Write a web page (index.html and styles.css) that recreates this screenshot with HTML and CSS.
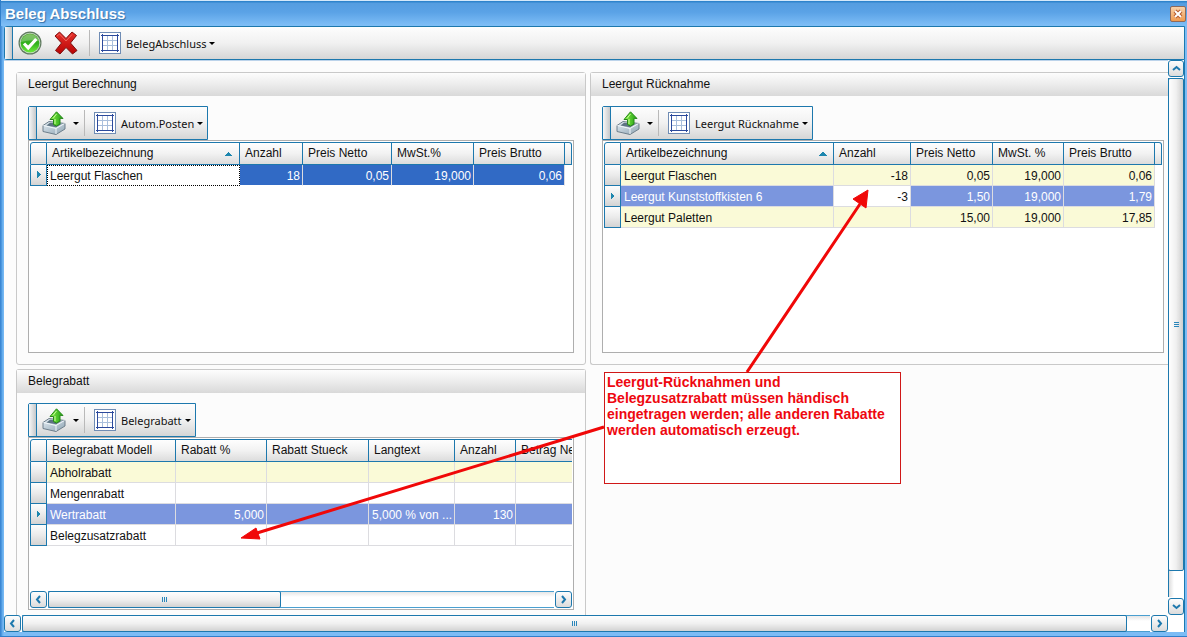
FILE: index.html
```html
<!DOCTYPE html>
<html lang="de">
<head>
<meta charset="utf-8">
<title>Beleg Abschluss</title>
<link rel="stylesheet" href="styles.css">
</head>
<body>
<svg class="defs" aria-hidden="true">
  <defs>
    <linearGradient id="green" x1="0" y1="0" x2="0" y2="1"><stop offset="0" stop-color="#5fae3a"/><stop offset=".5" stop-color="#2fae1c"/><stop offset="1" stop-color="#6dea3c"/></linearGradient>
    <linearGradient id="red" x1="0" y1="0" x2="0" y2="1"><stop offset="0" stop-color="#e8322c"/><stop offset="1" stop-color="#b80404"/></linearGradient>
    <linearGradient id="arrow" x1="0" y1="0" x2="1" y2="0"><stop offset="0" stop-color="#8cf04a"/><stop offset="1" stop-color="#1fa012"/></linearGradient>
    <linearGradient id="tray" x1="0" y1="0" x2="1" y2="1"><stop offset="0" stop-color="#e4edf3"/><stop offset="1" stop-color="#8ea4b3"/></linearGradient>
    <symbol id="i-grid" viewBox="0 0 22 22">
      <rect x=".5" y=".5" width="21" height="21" fill="#fff" stroke="#6f8cb4"/>
      <path d="M8.500 4v14M13.500 4v14M4 8.500h14M4 13.500h14" stroke="#a9bfdc" fill="none"/>
      <path d="M3.500 2v18M18.500 2v18M2 3.500h18M2 18.500h18" stroke="#2c4a9c" fill="none"/>
    </symbol>
    <symbol id="i-export" viewBox="0 0 24 24">
      <path d="M1 14.500 7 10.500 23 12.500V18L14 23.500 1 20.500z" fill="url(#tray)" stroke="#6e7f8b"/>
      <path d="M1.500 14.500 14 17.500 22.500 12.500M14 17.500v5.500" fill="none" stroke="#f3f8fb"/>
      <path d="M4.500 14.500 8 11.800 19.500 13 14 16.300z" fill="#5d7382"/>
      <path d="M11.500 13.500V8.500H8L14.500.800 21 7.500l-3-.2V13l-3.500 2z" fill="url(#arrow)" stroke="#27881a"/>
      <path d="M11 7.500 14.500 3M13 8v5" stroke="#c8ff98" fill="none"/>
    </symbol>
  </defs>
</svg>

<main class="window">
  <header class="titlebar">
    <h1 class="window-title">Beleg Abschluss</h1>
    <button class="close" type="button" aria-label="Schließen">
      <svg width="10" height="10" viewBox="0 0 10 10"><path d="M2 2l6 6M8 2 2 8" stroke="#b4582c" stroke-width="4"/><path d="M2 2l6 6M8 2 2 8" stroke="#fff" stroke-width="2"/></svg>
    </button>
  </header>

  <div class="toolbar toolbar-main">
    <span class="grip"></span>
    <button class="tool" type="button" aria-label="Übernehmen">
      <svg width="24" height="24" viewBox="0 0 24 24"><circle cx="12" cy="12" r="11.500" fill="#5f7a5f"/><circle cx="12" cy="12" r="10.300" fill="#c9dcc6"/><circle cx="12" cy="12" r="9.400" fill="url(#green)"/><path d="M3 11a9.200 9 0 0 1 18-1Q13 8 3 11z" fill="#fff" opacity=".25"/><path d="M6 12.500l4.200 4.300L18.300 8" fill="none" stroke="#fff" stroke-width="3.200"/></svg>
    </button>
    <button class="tool tool-cancel" type="button" aria-label="Abbrechen">
      <svg width="24" height="24" viewBox="0 0 24 24"><path d="M5.500 1 12 7.500 18 1l4.500 3.500-6 7.500 6.500 7.500-4.500 3.500L12 16.500 6 23l-4.500-3.500L7.500 12 1 5z" fill="url(#red)" stroke="#7c1010" stroke-linejoin="round"/><path d="M3 5l2.500-2L12 10l6-6.500" fill="none" stroke="#ff8b80" opacity=".6"/></svg>
    </button>
    <span class="separator"></span>
    <button class="tool tool-menu" type="button"><svg width="22" height="22"><use href="#i-grid"/></svg><span>BelegAbschluss</span><i class="caret"></i></button>
  </div>

  <div class="viewport">
    <div class="content">
      <section class="panel">
        <h2 class="panel-title">Leergut Berechnung</h2>
        <div class="panel-body">
          <div class="toolbar toolbar-small">
            <span class="grip"></span>
            <button class="tool tool-export" type="button" aria-label="Exportieren"><svg width="24" height="24"><use href="#i-export"/></svg><i class="caret"></i></button>
            <span class="separator"></span>
            <button class="tool tool-menu" type="button"><svg width="22" height="22"><use href="#i-grid"/></svg><span>Autom.Posten</span><i class="caret"></i></button>
          </div>
          <div class="grid">
            <div class="grid-view">
              <table>
                <colgroup><col class="w17"><col><col class="w63"><col class="w89"><col class="w82"><col class="w91"><col class="w7"></colgroup>
                <thead><tr><th></th><th class="sorted">Artikelbezeichnung</th><th>Anzahl</th><th>Preis Netto</th><th>MwSt.%</th><th>Preis Brutto</th><th class="end"></th></tr></thead>
                <tbody>
                  <tr class="active"><th class="current"></th><td class="focus">Leergut Flaschen</td><td class="num">18</td><td class="num">0,05</td><td class="num">19,000</td><td class="num">0,06</td><td class="rest"></td></tr>
                </tbody>
              </table>
            </div>
          </div>
        </div>
      </section>

      <section class="panel panel-right">
        <h2 class="panel-title">Leergut Rücknahme</h2>
        <div class="panel-body">
          <div class="toolbar toolbar-small">
            <span class="grip"></span>
            <button class="tool tool-export" type="button" aria-label="Exportieren"><svg width="24" height="24"><use href="#i-export"/></svg><i class="caret"></i></button>
            <span class="separator"></span>
            <button class="tool tool-menu" type="button"><svg width="22" height="22"><use href="#i-grid"/></svg><span>Leergut Rücknahme</span><i class="caret"></i></button>
          </div>
          <div class="grid">
            <div class="grid-view">
              <table>
                <colgroup><col class="w17"><col><col class="w77"><col class="w82"><col class="w71"><col class="w91"><col class="w7"></colgroup>
                <thead><tr><th></th><th class="sorted">Artikelbezeichnung</th><th>Anzahl</th><th>Preis Netto</th><th>MwSt. %</th><th>Preis Brutto</th><th class="end"></th></tr></thead>
                <tbody>
                  <tr class="odd"><th></th><td>Leergut Flaschen</td><td class="num">-18</td><td class="num">0,05</td><td class="num">19,000</td><td class="num">0,06</td><td class="rest"></td></tr>
                  <tr class="selected"><th class="current"></th><td>Leergut Kunststoffkisten 6</td><td class="num edit">-3</td><td class="num">1,50</td><td class="num">19,000</td><td class="num">1,79</td><td class="rest"></td></tr>
                  <tr class="odd"><th></th><td>Leergut Paletten</td><td></td><td class="num">15,00</td><td class="num">19,000</td><td class="num">17,85</td><td class="rest"></td></tr>
                </tbody>
              </table>
            </div>
          </div>
        </div>
      </section>

      <section class="panel panel-bottom">
        <h2 class="panel-title">Belegrabatt</h2>
        <div class="panel-body">
          <div class="toolbar toolbar-small">
            <span class="grip"></span>
            <button class="tool tool-export" type="button" aria-label="Exportieren"><svg width="24" height="24"><use href="#i-export"/></svg><i class="caret"></i></button>
            <span class="separator"></span>
            <button class="tool tool-menu" type="button"><svg width="22" height="22"><use href="#i-grid"/></svg><span>Belegrabatt</span><i class="caret"></i></button>
          </div>
          <div class="grid">
            <div class="grid-view">
              <table class="wide">
                <colgroup><col class="w17"><col class="w129"><col class="w91"><col class="w102"><col class="w86"><col class="w61"><col></colgroup>
                <thead><tr><th></th><th>Belegrabatt Modell</th><th>Rabatt %</th><th>Rabatt Stueck</th><th>Langtext</th><th>Anzahl</th><th>Betrag Netto</th></tr></thead>
                <tbody>
                  <tr class="odd"><th></th><td>Abholrabatt</td><td></td><td></td><td></td><td></td><td></td></tr>
                  <tr><th></th><td>Mengenrabatt</td><td></td><td></td><td></td><td></td><td></td></tr>
                  <tr class="selected"><th class="current"></th><td>Wertrabatt</td><td class="num">5,000</td><td></td><td>5,000 % von ...</td><td class="num">130</td><td></td></tr>
                  <tr><th></th><td>Belegzusatzrabatt</td><td></td><td></td><td></td><td></td><td></td></tr>
                </tbody>
              </table>
            </div>
            <div class="scroll scroll-h">
              <button class="scroll-btn" type="button" aria-label="Nach links"><svg width="7" height="9" viewBox="0 0 7 9"><path d="M5 1 2 4.500 5 8"/></svg></button>
              <div class="track"><span class="thumb thumb-inner"><i></i></span></div>
              <button class="scroll-btn" type="button" aria-label="Nach rechts"><svg width="7" height="9" viewBox="0 0 7 9"><path d="M2 1l3 3.500L2 8"/></svg></button>
            </div>
          </div>
        </div>
      </section>
    </div>

    <div class="scroll scroll-v">
      <button class="scroll-btn" type="button" aria-label="Nach oben"><svg width="9" height="7" viewBox="0 0 9 7"><path d="M1 5 4.500 2 8 5"/></svg></button>
      <div class="track"><span class="thumb thumb-y"><i></i></span></div>
      <button class="scroll-btn" type="button" aria-label="Nach unten"><svg width="9" height="7" viewBox="0 0 9 7"><path d="M1 2l3.500 3L8 2"/></svg></button>
    </div>
    <div class="scroll scroll-h">
      <button class="scroll-btn" type="button" aria-label="Nach links"><svg width="7" height="9" viewBox="0 0 7 9"><path d="M5 1 2 4.500 5 8"/></svg></button>
      <div class="track"><span class="thumb thumb-x"><i></i></span></div>
      <button class="scroll-btn" type="button" aria-label="Nach rechts"><svg width="7" height="9" viewBox="0 0 7 9"><path d="M2 1l3 3.500L2 8"/></svg></button>
    </div>
    <div class="corner"></div>
  </div>

  <svg class="arrows" width="920" height="560" viewBox="0 0 920 560" aria-hidden="true">
    <path d="M747 372 860 204M604 427 257 533" stroke="#f00808" stroke-width="3" fill="none"/>
    <path d="M868 190 866 208 853 199zM241 538 256 528 260 539z" fill="#f00808" stroke="#f00808"/>
  </svg>
  <p class="note">Leergut-Rücknahmen und Belegzusatzrabatt müssen händisch eingetragen werden; alle anderen Rabatte werden automatisch erzeugt.</p>
</main>
</body>
</html>
```
FILE: styles.css
```css
* { box-sizing: border-box; }

body {
  margin: 0;
  font-family: "Liberation Sans", Arial, sans-serif;
  font-size: 12px;
  color: #111;
  overflow: hidden;
}

button { font: inherit; color: inherit; padding: 0; border: 0; background: none; }
svg { display: block; flex: none; }
.defs { position: absolute; width: 0; height: 0; }

.window {
  position: relative;
  display: flex;
  flex-direction: column;
  height: 100vh;
  padding: 0 2px 4px 4px;
  background: linear-gradient(90deg, #3b87d3 0, #3b87d3 1px, #5fa8ea 2px, #7cbcf5 4px, #7cbcf5);
  border-bottom: 1px solid #2f7fcb;
}

/* title bar */
.titlebar {
  display: flex;
  align-items: center;
  justify-content: space-between;
  height: 26px;
  margin: 0 -2px 0 -4px;
  padding: 2px 0 0 4px;
  border-left: 1px solid #2f7fcb;
  background: linear-gradient(#d6e9fa 0, #d6e9fa 1px, #2f84cc 1px, #2f84cc 2px, #559de0 3px, #5aa2e6 12px, #7dbdf6 25px);
}
.window-title {
  margin: 0;
  font-size: 15px;
  line-height: 22px;
  color: #fff;
  text-shadow: 1px 1px 1px #356fa8;
}
.close {
  display: grid;
  place-items: center;
  width: 16px;
  height: 16px;
  margin-right: 1px;
  border: 1px solid #8f6a5a;
  border-radius: 2px;
  background: linear-gradient(#f9d2a9, #f09a4e);
}

/* toolbars */
.toolbar {
  display: flex;
  align-items: center;
  flex: none;
  height: 34px;
  border: 1px solid #1d78ad;
  background: linear-gradient(#fdfdfd, #f1f1f1 50%, #d5d6d6);
  font-family: "Noto Sans", "Open Sans", sans-serif;
  font-size: 11px;
}
.toolbar-main { border-radius: 3px 0 0 3px; }
.toolbar-small { align-self: flex-start; border-radius: 2px 0 0 0; }
.grip {
  align-self: stretch;
  width: 8px;
  border-right: 1px solid #1d78ad;
  background: linear-gradient(90deg, #f7f7f7, #c6c8ca);
}
.tool { display: flex; align-items: center; margin-left: 5px; }
.tool-cancel { margin-left: 12px; }
.separator { width: 1px; height: 26px; background: #b9b9b9; }
.tool-cancel + .separator { margin-left: 11px; }
.tool-export { gap: 7px; margin-right: 5px; }
.tool-menu { gap: 5px; margin-left: 9px; padding-right: 4px; }
.caret { border: 3px solid transparent; border-top-color: #000; border-bottom: 0; }
.tool-menu .caret { margin-left: -2px; }

/* scrolled area */
.viewport {
  display: grid;
  grid-template: minmax(0, 1fr) 17px / minmax(0, 1fr) 17px;
  flex: 1;
  min-height: 0;
  background: #fff;
}
.content {
  display: grid;
  grid-template: minmax(0, 293fr) minmax(0, 246fr) / minmax(0, 570fr) minmax(0, 578fr);
  gap: 4px;
  padding: 11px 0 0 12px;
  border-top: 1px solid #bcd3ea;
  background: #fcfcfc;
}
.panel {
  display: flex;
  flex-direction: column;
  border: 1px solid #c9c9c9;
  border-radius: 3px;
}
.panel-right { border-right: 0; border-radius: 3px 0 0 3px; }
.panel-bottom { border-bottom: 0; border-radius: 3px 3px 0 0; }
.panel-title {
  margin: 0;
  padding-left: 11px;
  font-size: 12px;
  font-weight: normal;
  line-height: 23px;
  background: linear-gradient(#fdfdfd, #ececec 50%, #d9d9d9);
}
.panel-body {
  display: flex;
  flex-direction: column;
  flex: 1;
  min-height: 0;
  padding: 10px 11px 11px 11px;
}
.panel-right .panel-body { padding-right: 4px; }
.panel-bottom .panel-body { padding-bottom: 5px; }

/* data grids */
.grid {
  display: flex;
  flex-direction: column;
  flex: 1;
  min-height: 0;
  padding: 1px;
  border: 1px solid #aeaeae;
  background: #fff;
}
.grid-view { flex: 1; min-height: 0; overflow: hidden; }
table { width: 100%; table-layout: fixed; border-collapse: separate; border-spacing: 0; }
.wide { width: 586px; }
.w7 { width: 7px; }
.w17 { width: 17px; }
.w61 { width: 61px; }
.w63 { width: 63px; }
.w71 { width: 71px; }
.w77 { width: 77px; }
.w82 { width: 82px; }
.w86 { width: 86px; }
.w89 { width: 89px; }
.w91 { width: 91px; }
.w102 { width: 102px; }
.w129 { width: 129px; }

th, td { padding: 0; white-space: nowrap; overflow: hidden; font-weight: normal; text-align: left; }
thead th {
  height: 23px;
  padding-left: 5px;
  line-height: 21px;
  border: solid #1d78ad;
  border-width: 1px 1px 1px 0;
  background: linear-gradient(#fefefe, #f2f2f2 50%, #dcdcdc);
}
thead th:first-child { border-left-width: 1px; border-radius: 3px 0 0 0; }
thead .end { padding: 0; border-radius: 0 3px 0 0; }
thead .sorted {
  background:
    linear-gradient(to bottom right, transparent 50%, #1d86ae 50%) right 10px center / 4px 4px no-repeat,
    linear-gradient(to bottom left, transparent 50%, #1d86ae 50%) right 6px center / 4px 4px no-repeat,
    linear-gradient(#fefefe, #f2f2f2 50%, #dcdcdc);
}
tbody th {
  height: 21px;
  border: solid #1d78ad;
  border-width: 0 1px 1px 1px;
  background: linear-gradient(#fdfdfd, #ebebeb 50%, #d3d3d3);
}
tbody .current {
  background:
    linear-gradient(to bottom left, transparent 50%, #1d86ae 50%) 6px 6px / 4px 4px no-repeat,
    linear-gradient(to top left, transparent 50%, #1d86ae 50%) 6px 10px / 4px 4px no-repeat,
    linear-gradient(#fdfdfd, #ebebeb 50%, #d3d3d3);
}
td {
  height: 21px;
  padding: 2px 2px 0 3px;
  line-height: 18px;
  border: solid #dcdce0;
  border-width: 0 1px 1px 0;
}
.num { text-align: right; }
.odd td { background: #fafad7; }
.selected td { background: #7b96de; color: #fff; }
.active td { background: #316ac5; color: #fff; border-bottom-color: #fff; }
.selected .edit { background: #fff; color: #111; }
.active .focus { background: #fff; color: #111; border: 1px dotted #000; padding: 1px 2px 0; }
tr .rest, .odd .rest { background: #fff; border: 0; padding: 0; }

/* scroll bars */
.scroll { display: flex; gap: 1px; background: #fff; }
.scroll-h { height: 17px; }
.scroll-v { flex-direction: column; width: 17px; border-right: 1px solid #1d78ad; }
.scroll-btn {
  display: grid;
  place-items: center;
  flex: none;
  width: 17px;
  height: 17px;
  border: 1px solid #1d78ad;
  border-radius: 3px;
  background: linear-gradient(#fdfdfd, #dcdcdc);
}
.scroll-v .scroll-btn { width: 16px; }
.scroll-btn path { fill: none; stroke: #1d78ad; stroke-width: 2; }
.track { display: flex; flex: 1; background: linear-gradient(#e6e6e6, #fff 5px); }
.scroll-h .track { border: solid #4a9fd0; border-width: 1px 0; }
.scroll-v .track { flex-direction: column; border-left: 1px solid #1d78ad; background: linear-gradient(90deg, #dedede, #fff 5px); }
.thumb {
  display: grid;
  place-items: center;
  border: 1px solid #1d78ad;
  border-radius: 2px;
  background: linear-gradient(#fefefe, #f0f0f0 50%, #d2d2d2);
}
.scroll-h .thumb { margin: -1px 0; }
.scroll-v .thumb { margin-left: -1px; background: linear-gradient(90deg, #fefefe, #f0f0f0 50%, #cfcfcf); }
.thumb i { width: 5px; height: 5px; background: repeating-linear-gradient(90deg, #2a86ba 0, #2a86ba 1px, transparent 1px, transparent 2px); }
.scroll-v .thumb i { background: repeating-linear-gradient(#2a86ba 0, #2a86ba 1px, transparent 1px, transparent 2px); }
.thumb-inner { width: 46%; }
.thumb-x { width: 98%; }
.thumb-y { height: 95%; }
.corner { background: #fff; border-right: 1px solid #1d78ad; }

/* annotation over the window */
.arrows { position: absolute; left: 0; top: 0; pointer-events: none; }
.note {
  position: absolute;
  left: 604px;
  top: 372px;
  width: 297px;
  height: 112px;
  margin: 0;
  padding: 1px 2px;
  border: 1px solid #d01818;
  background: #fff;
  color: #ee0810;
  font-size: 14px;
  font-weight: bold;
  line-height: 16px;
}
```
